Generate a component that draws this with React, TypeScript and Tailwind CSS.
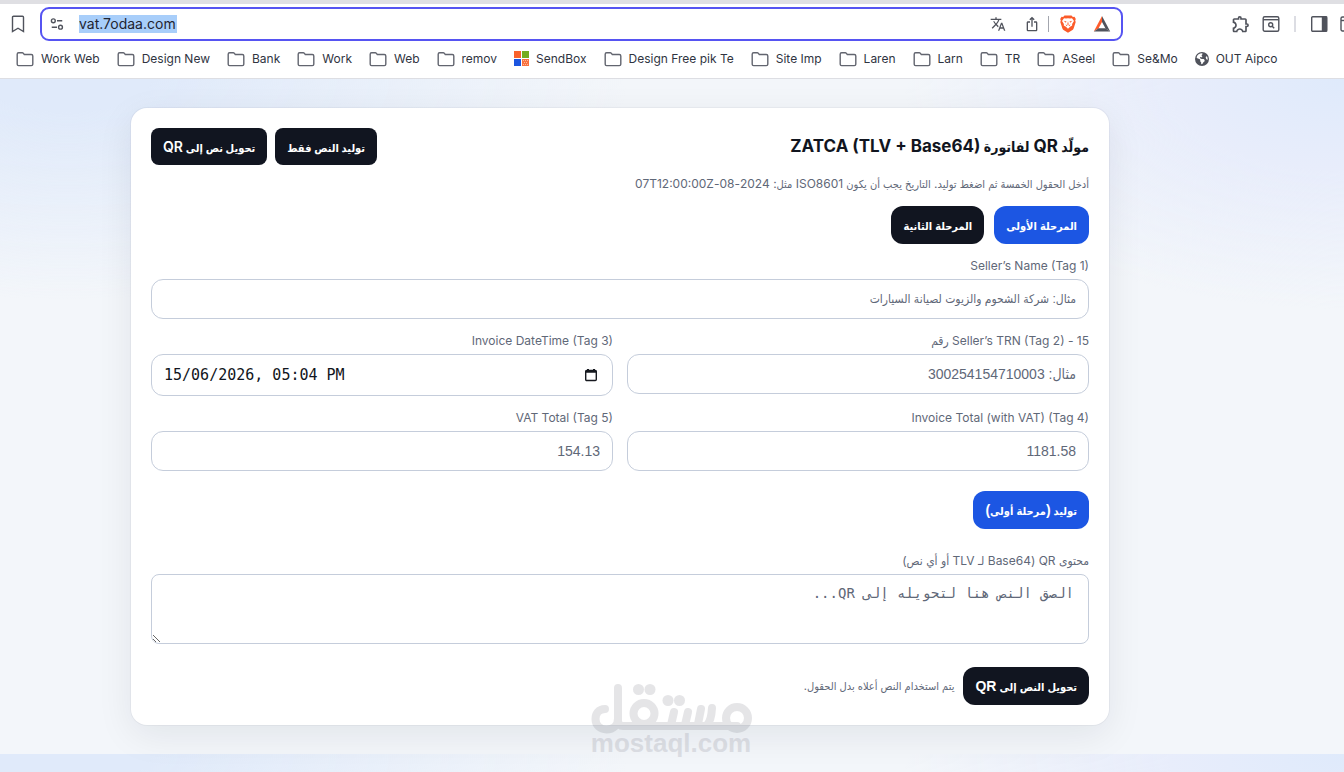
import type { ComponentType, ReactNode } from "react";
import { MdTranslate, MdIosShare, MdOutlineExtension } from "react-icons/md";
import { FaEarthAmericas } from "react-icons/fa6";

const sans = "font-['Inter','DejaVu_Sans_Condensed','DejaVu_Sans',sans-serif]";
const arial = "font-['Liberation_Sans','DejaVu_Sans_Condensed','DejaVu_Sans',sans-serif]";
const mono = "font-['DejaVu_Sans_Mono','Liberation_Mono',monospace]";

/** Renders text with its Arabic runs in a size of their own. */
function Mixed({ text, arabic }: { text: string; arabic: string }) {
  const runs = text.split(/([\u0600-\u06FF][\u0600-\u06FF\s]*)/);
  return (
    <>
      {runs.map((run, i) => (i % 2 === 1 ? <span key={i} className={arabic}>{run}</span> : run))}
    </>
  );
}

function FolderIcon() {
  return (
    <svg viewBox="0 0 18 16" className="h-4 w-[18px] shrink-0" fill="none" stroke="#62656f" strokeWidth="1.4">
      <path d="M1.2 3.2c0-.9.5-1.5 1.4-1.5h3.6c.5 0 .9.2 1.2.6l.9 1.2h7c.9 0 1.5.5 1.5 1.4v8.300c0 .9-.6 1.400-1.5 1.400H2.600c-.9 0-1.400-.5-1.400-1.400z" />
    </svg>
  );
}

function SendBoxIcon() {
  return (
    <svg viewBox="0 0 15 15" className="size-[15px] shrink-0">
      <rect width="7" height="7" fill="#f9632c" />
      <rect x="8" width="7" height="7" fill="#74ad1e" />
      <rect y="8" width="7" height="7" fill="#1b55e0" />
      <rect x="8" y="8" width="7" height="7" fill="#f9713f" />
      <path d="M9 9.500h1M11 9.500h1M13 9.500h1M10 11.500h1M12 11.500h1M9 13.500h1M11 13.500h1M13 13.500h1" stroke="#fbb89f" />
    </svg>
  );
}

function BraveIcon() {
  return (
    <svg viewBox="0 0 18 18" className="size-[18px]">
      <path d="M5.500.5h7l1.400 1.500 1.600-.2 1.300 2.100-.6 1.500.5 1.600-2 6.200c-.3.9-.8 1.500-1.600 2L9 17.800l-4.100-2.600c-.8-.5-1.300-1.100-1.600-2l-2-6.200.5-1.600-.6-1.500 1.300-2.100 1.600.2z" fill="#fb5b2a" />
      <path d="M5 3.300l2 .3 2-.4 2 .4 2-.3 2 2.700-1.900 3 .1 1.400-2.100 1.400L9 13.800l-2.100-2-2.100-1.400.1-1.400L3 6z" fill="#fff" />
      <path d="M4.700 5.800l2.800.7-.7 1.200zM13.300 5.800l-2.800.7.7 1.200zM9 6.200l.7 3.200L9 10l-.7-.6zM6.500 9.300l2 1.300-.9.6zM11.500 9.300l-2 1.300.9.6z" fill="#fb5b2a" />
    </svg>
  );
}

type Bookmark = { name: string; Icon?: ComponentType };
const GlobeIcon = () => <FaEarthAmericas className="size-3.5 shrink-0 text-[#50535c]" />;

const bookmarks: Bookmark[] = [
  { name: "Work Web" },
  { name: "Design New" },
  { name: "Bank" },
  { name: "Work" },
  { name: "Web" },
  { name: "remov" },
  { name: "SendBox", Icon: SendBoxIcon },
  { name: "Design Free pik Te" },
  { name: "Site Imp" },
  { name: "Laren" },
  { name: "Larn" },
  { name: "TR" },
  { name: "ASeel" },
  { name: "Se&Mo" },
  { name: "OUT Aipco", Icon: GlobeIcon },
];

function IconButton({ label, children }: { label: string; children: ReactNode }) {
  return (
    <button type="button" aria-label={label} className="flex size-[18px] shrink-0 items-center justify-center text-[#50535c]">
      {children}
    </button>
  );
}

function BrowserBar() {
  return (
    <header className="overflow-hidden border-b border-[#dddee3] bg-white">
      <div className="h-1 bg-[#dfdfe3]" />
      <div className="flex items-center pt-[3px] pl-[9px]">
        <IconButton label="Bookmark this page">
          <svg viewBox="0 0 18 18" className="size-[18px]" fill="none" stroke="currentColor" strokeWidth="1.400">
            <path d="M3.500 2.300c0-.6.4-1 1-1h9c.6 0 1 .4 1 1v14.200L9 13.200l-5.500 3.300z" />
          </svg>
        </IconButton>
        <div className="ml-[13px] flex h-[34px] flex-1 items-center rounded-[9px] border-2 border-[#5654f2] pr-2.5 pl-1.5">
          <IconButton label="Site settings">
            <svg viewBox="0 0 16 16" className="size-3.5" fill="none" stroke="currentColor" strokeWidth="1.600">
              <circle cx="3.800" cy="4.300" r="2.200" />
              <path d="M8 4.300h6M2 11.700h6" />
              <circle cx="12" cy="11.700" r="2.200" />
            </svg>
          </IconButton>
          <input
            aria-label="Address"
            defaultValue="vat.7odaa.com"
            className="ml-[13px] h-[18px] w-[98px] bg-[#a8cefa] text-sm text-[#1f2430] outline-none"
          />
          <div className="flex-1" />
          <div className="flex items-center">
            <IconButton label="Translate"><MdTranslate className="size-4" /></IconButton>
            <span className="w-4" />
            <IconButton label="Share"><MdIosShare className="size-4" /></IconButton>
            <span className="mr-2.5 ml-[7px] h-4 w-px bg-[#a3a6ae]" />
            <IconButton label="Brave Shields"><BraveIcon /></IconButton>
            <span className="w-4" />
            <IconButton label="Rewards">
              <svg viewBox="0 0 18 18" className="size-[18px]">
                <path d="M9 1 0.800 16.500 5.600 13.200 9 7z" fill="#ff5c2b" />
                <path d="M9 1 17.200 16.500 12.400 13.200 9 7z" fill="#50535c" />
                <path d="M0.800 16.500h16.400L12.400 13.200H5.600z" fill="#50535c" />
              </svg>
            </IconButton>
          </div>
        </div>
        <div className="ml-[109px] flex w-28 items-center overflow-hidden">
          <IconButton label="Extensions"><MdOutlineExtension className="size-5 shrink-0" /></IconButton>
          <span className="w-3 shrink-0" />
          <IconButton label="Search tabs">
            <svg viewBox="0 0 18 18" className="size-[18px]" fill="none" stroke="currentColor" strokeWidth="1.400">
              <rect x="1.200" y="1.700" width="15.600" height="14.600" rx="1.500" />
              <path d="M1.200 4.700h15.600" />
              <circle cx="8.700" cy="9.800" r="2" />
              <path d="m10.200 11.300 2 2" />
            </svg>
          </IconButton>
          <span className="mx-3.5 h-4 w-0.5 shrink-0 bg-[#dcdde3]" />
          <IconButton label="Sidebar">
            <svg viewBox="0 0 18 18" className="size-[18px]" fill="none" stroke="currentColor" strokeWidth="1.400">
              <rect x="1.700" y="1.700" width="15" height="14.600" rx="1" />
              <path d="M12.500 2h4v14h-4z" fill="currentColor" />
            </svg>
          </IconButton>
          <span className="w-3 shrink-0" />
          <IconButton label="Wallet">
            <svg viewBox="0 0 18 18" className="size-[18px]" fill="none" stroke="currentColor" strokeWidth="1.400">
              <rect x="1" y="2" width="16" height="14" rx="1.500" />
              <path d="M1 5.500h16" />
            </svg>
          </IconButton>
        </div>
      </div>
      <nav aria-label="Bookmarks" className="flex h-[37px] items-center gap-[17px] pb-0.5 pl-4">
        {bookmarks.map(({ name, Icon = FolderIcon }) => (
          <a key={name} href="#" className="flex shrink-0 items-center gap-[7px] text-xs text-[#30343f]">
            <Icon />
            {name}
          </a>
        ))}
      </nav>
    </header>
  );
}

const dark = "bg-[#111520]";
const blue = "bg-[#1c56e3]";

function ActionButton({ tone, text }: { tone: string; text: string }) {
  return (
    <button type="button" className={`h-[38px] rounded-xl px-3 text-sm font-bold whitespace-nowrap text-white ${arial} ${tone}`}>
      <Mixed text={text} arabic="text-[11px]" />
    </button>
  );
}

function HeaderButton({ text }: { text: string }) {
  return (
    <button type="button" className={`h-[37px] rounded-lg px-3 text-sm font-semibold whitespace-nowrap text-white ${dark}`}>
      <Mixed text={text} arabic="text-[11px]" />
    </button>
  );
}

const labelClass = "block text-xs leading-5 text-[#5f6878]";
const fieldClass = "mt-[3px] w-full rounded-xl border border-[#c5cddb] bg-white";

type FieldProps = { id: string; label: string; placeholder: string; size?: string };

function Field({ id, label, placeholder, size = "text-sm" }: FieldProps) {
  return (
    <div>
      <label htmlFor={id} className={labelClass}>{label}</label>
      <input id={id} placeholder={placeholder} className={`${fieldClass} ${arial} ${size} h-10 px-3 placeholder:text-[#5f6878]`} />
    </div>
  );
}

function Watermark() {
  return (
    <div className="pointer-events-none absolute top-[575px] left-[459px] w-[162px] text-[#80808c] opacity-20">
      <svg viewBox="0 0 162 52" className="block h-[52px] w-full" fill="none" stroke="currentColor">
        <g strokeWidth="8" strokeLinecap="round" strokeLinejoin="round">
          <path d="M15 26C8.500 26 5.500 31 5.500 36c0 6 4.500 10.500 11 10.500 7 0 11.500-4.500 11.500-11V5v33c0 3 2 5 5 5h114" />
          <circle cx="54" cy="30.500" r="10.500" />
          <circle cx="147" cy="35" r="11" />
          <path d="M84 29l-3 13M98 29l-3 13M111 26l-3 15M122 25c-.5 9-2 14-5 17" />
        </g>
        <g fill="currentColor" stroke="none">
          <circle cx="48.500" cy="6.500" r="5.500" />
          <circle cx="60" cy="6.500" r="5.500" />
          <circle cx="78" cy="17.500" r="5.500" />
          <circle cx="89.500" cy="17.500" r="5.500" />
        </g>
      </svg>
      <div dir="ltr" className="text-center font-['Liberation_Sans',sans-serif] text-[26px] leading-4 font-bold">mostaql.com</div>
    </div>
  );
}

export default function App() {
  return (
    <div className={`flex min-h-screen flex-col overflow-x-hidden ${sans}`}>
      <BrowserBar />
      <main
        dir="rtl"
        className="flex-1 bg-[#f3f6fa] bg-[radial-gradient(560px_220px_at_5%_0%,#e0eafa_15%,transparent),radial-gradient(440px_230px_at_100%_0%,#dfeafb,#e8edfb_40%,transparent)] bg-[length:100%_675px] pt-[29px] pr-[235px] pb-[47px] pl-[131px]"
      >
        <section className="relative rounded-2xl bg-white px-5 py-5 shadow-[0_10px_36px_rgba(15,23,42,0.08),0_0_0_1px_rgba(15,23,42,0.04)]">
          <div className="flex items-center justify-between">
            <h1 className="text-[17px] font-bold text-[#111520]">
              <Mixed text="مولّد QR لفاتورة ZATCA (TLV + Base64)" arabic="text-sm" />
            </h1>
            <div className="flex gap-2">
              <HeaderButton text="توليد النص فقط" />
              <HeaderButton text="تحويل نص إلى QR" />
            </div>
          </div>
          <p className="mt-[9px] text-xs leading-5 text-[#5f6878]">
            <Mixed text="أدخل الحقول الخمسة ثم اضغط توليد. التاريخ يجب أن يكون ISO8601 مثل: 2024-08-07T12:00:00Z" arabic="text-[11px]" />
          </p>
          <div className="mt-3 flex gap-2.5">
            <ActionButton tone={blue} text="المرحلة الأولى" />
            <ActionButton tone={dark} text="المرحلة الثانية" />
          </div>
          <form className="mt-3">
            <Field id="seller" label="Seller’s Name (Tag 1)" placeholder="مثال: شركة الشحوم والزيوت لصيانة السيارات" size="text-xs" />
            <div className="mt-3 grid grid-cols-2 gap-x-3.5 gap-y-3">
              <Field id="trn" label="15 - Seller’s TRN (Tag 2) رقم" placeholder="مثال: 300254154710003" />
              <div>
                <label htmlFor="datetime" className={labelClass}>Invoice DateTime (Tag 3)</label>
                <div dir="ltr" className={`${fieldClass} flex h-[42px] items-center pr-3.5 pl-3`}>
                  <input id="datetime" defaultValue="15/06/2026, 05:04 PM" className={`min-w-0 flex-1 text-[15px] text-[#111520] outline-none ${mono}`} />
                  <button type="button" aria-label="Open calendar">
                    <svg viewBox="0 0 14 14" className="size-3.5" fill="none" stroke="#16181f" strokeWidth="1.400">
                      <rect x="1.700" y="2.500" width="10.600" height="10" rx="1" />
                      <path d="M1.500 3.700h11M4 1v2M10 1v2" strokeWidth="2" />
                    </svg>
                  </button>
                </div>
              </div>
              <Field id="total" label="Invoice Total (with VAT) (Tag 4)" placeholder="1181.58" />
              <Field id="vat" label="VAT Total (Tag 5)" placeholder="154.13" />
            </div>
            <div className="mt-5 flex">
              <ActionButton tone={blue} text="توليد (مرحلة أولى)" />
            </div>
            <label htmlFor="content" className={`${labelClass} mt-[22px]`}>محتوى QR (Base64 لـ TLV أو أي نص)</label>
            <textarea
              id="content"
              placeholder="الصق النص هنا لتحويله إلى QR..."
              className={`mt-[3px] block h-[70px] w-full resize-y rounded-lg border border-[#c5cddb] px-3.5 py-2 text-sm placeholder:text-[#5f6878] ${mono}`}
            />
            <div className="mt-[23px] flex items-center gap-[9px]">
              <ActionButton tone={dark} text="تحويل النص إلى QR" />
              <span className="text-[11px] text-[#5f6878]">يتم استخدام النص أعلاه بدل الحقول.</span>
            </div>
          </form>
          <Watermark />
        </section>
      </main>
    </div>
  );
}
